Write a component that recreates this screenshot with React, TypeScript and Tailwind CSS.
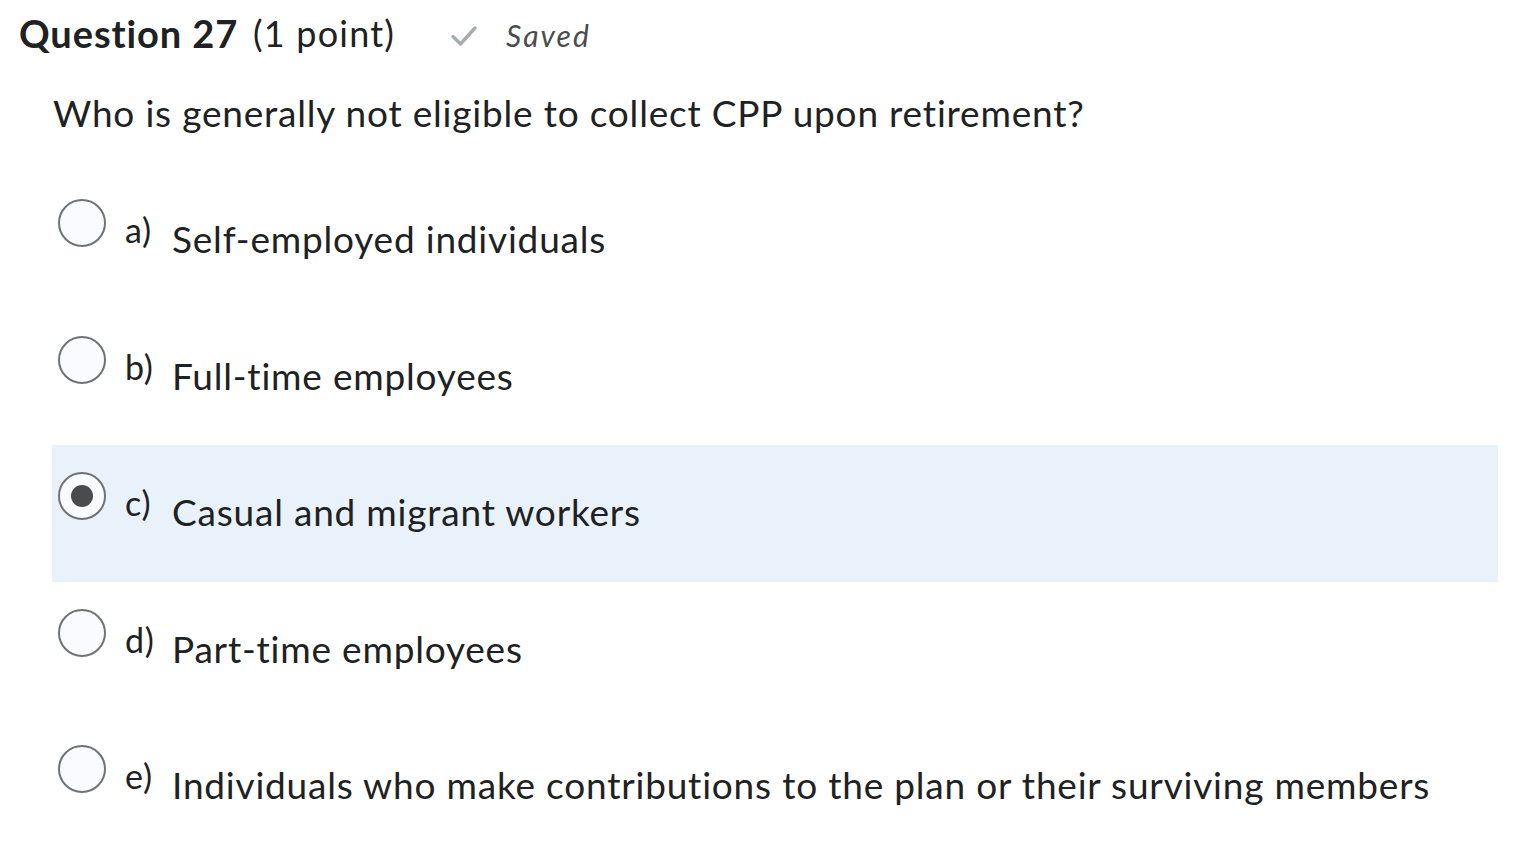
import React from "react";

const options = [
  { l: "a)", t: "Self-employed individuals" },
  { l: "b)", t: "Full-time employees" },
  { l: "c)", t: "Casual and migrant workers", sel: true },
  { l: "d)", t: "Part-time employees" },
  { l: "e)", t: "Individuals who make contributions to the plan or their surviving members" },
];

export default function App() {
  return (
    <div
      className="w-[1518px] h-[854px] bg-white text-[#202122] overflow-hidden [font-variant-ligatures:none]"
      style={{ fontFamily: "Lato, 'Noto Sans', sans-serif" }}
    >
      <div className="flex items-start pt-[14px] h-[50px] box-border">
        <span className="ml-[19px] w-[234px] whitespace-nowrap text-[38px] font-bold leading-none tracking-[0.9px]">Question 27</span>
        <span className="mt-[1px] w-[158px] whitespace-nowrap text-[36px] leading-none tracking-[1.2px]">(1 point)</span>
        <svg className="ml-[39px] mt-[10px]" width="28" height="23" viewBox="0 0 28 23">
          <path d="M3 12.5 L10.5 20 L25 4" fill="none" stroke="#a7acaf" strokeWidth="3.4" strokeLinecap="round" strokeLinejoin="round" />
        </svg>
        <span className="ml-[28px] mt-[6px] text-[30px] italic text-[#494c4e] leading-none tracking-[2px]">Saved</span>
      </div>
      <div className="ml-[53px] mt-[44px] text-[37px] leading-none tracking-[0.8px] whitespace-nowrap">
        Who is generally not eligible to collect CPP upon retirement?
      </div>
      <div className="flex flex-col mt-[41px]">
        {options.map((o) => (
          <div
            key={o.l}
            className={`ml-[52px] w-[1446px] h-[136.5px] flex items-start shrink-0 ${o.sel ? "bg-[#e9f1fb]" : ""}`}
          >
            <div className="ml-[6px] mt-[27px] w-[48px] h-[48px] rounded-full border-[2px] border-[#6e7376] bg-[#f9fbff] flex items-center justify-center shrink-0">
              {o.sel && <div className="w-[22px] h-[22px] rounded-full bg-[#494c4e]" />}
            </div>
            <span className="ml-[19px] mt-[41px] w-[47px] text-[34px] leading-none tracking-[0.8px] whitespace-nowrap">{o.l}</span>
            <span className="mt-[48px] text-[37px] leading-none tracking-[0.8px] whitespace-nowrap">{o.t}</span>
          </div>
        ))}
      </div>
    </div>
  );
}
